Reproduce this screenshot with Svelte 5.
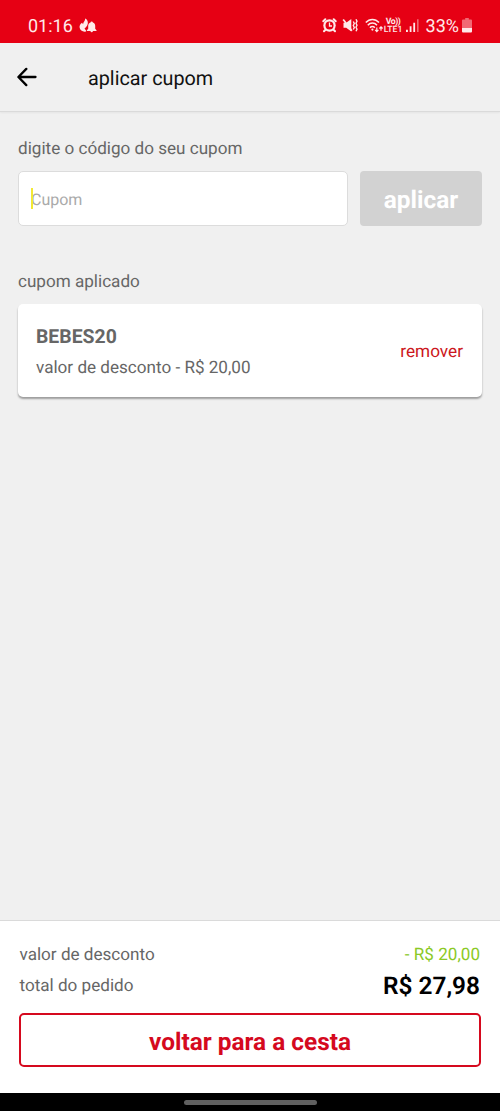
<script lang="ts">
	let code = $state('');
	let focused = $state(true);

	const coupon = { code: 'BEBES20', discount: 'R$ 20,00' };
	const total = 'R$ 27,98';
</script>

<div class="screen">
	<div class="status">
		<div class="status-left">
			<span class="clock">01:16</span>
			<svg class="notif" width="18" height="16" viewBox="0 0 18 16" fill="currentColor">
				<path d="M6.200.5C6.500 2.800 4 4 4.100 6.300L3 4.800C1.200 6.200.3 7.800.6 9.600 1 12.400 3.500 14 6.300 13.700L7.400 13 5.500 10.500C7.500 9 9.300 7 8.800 4 8.500 2.200 7.500 1.200 6.200.5Z" />
				<path d="M12.700 3.400a1.200 1.200 0 0 1 1.200 1c1.500.5 2.300 1.700 2.300 3.300v3.100l1.300 1.500v.7h-3.600a1.200 1.200 0 0 1-2.400 0H7.900v-.7l1.300-1.500V7.700c0-1.600.8-2.800 2.300-3.300a1.200 1.200 0 0 1 1.200-1Z" stroke="#e60014" stroke-width=".5" paint-order="stroke" />
			</svg>
		</div>
		<div class="status-right">
			<svg class="alarm" width="15" height="15" viewBox="0 0 15 15">
				<circle cx="7.500" cy="7.500" r="6.200" fill="currentColor" />
				<path d="M1.300 3.300 3.300 1.300M13.700 3.300 11.700 1.300M3.200 12 2 13.300M11.800 12l1.200 1.300" fill="none" stroke="currentColor" stroke-width="2" stroke-linecap="round" />
				<circle cx="7.500" cy="7.500" r="4" fill="#e60014" />
				<path d="M7.500 4.500v3.500h2.500" fill="none" stroke="currentColor" stroke-width="1.300" />
			</svg>
			<svg class="mute" width="16" height="15" viewBox="0 0 16 15">
				<path d="M1.500 4.800h2.700L9.300 1v12.500L4.200 9.800H1.500Z" fill="currentColor" />
				<path d="M1.200 1.500l8.700 11.300" stroke="currentColor" stroke-width="1.700" />
				<path d="M11.300 3.500l1 2-1 2 1 2-1 2M14 1.300l1 2-1 2 1 2-1 2 1 2-1 2" fill="none" stroke="currentColor" stroke-width="1.400" />
			</svg>
			<svg class="wifi" width="19" height="15" viewBox="0 0 19 15" fill="none" stroke="currentColor" stroke-width="1.500">
				<path d="M.8 4.600C4.500.4 10.300.4 14 4.600M2.800 7.200c2.500-2.900 6.700-2.900 9.200 0M5 9.800c1.300-1.600 3.500-1.600 4.800 0" />
				<circle cx="7.400" cy="11.600" r="1.100" fill="currentColor" stroke="none" />
				<path d="M11.800 9.500v4M10.200 11.900l1.600 1.700 1.600-1.700M16 12.800V8.800M14.400 10.500 16 8.800l1.600 1.700" stroke-width="1.200" />
			</svg>
			<span class="volte"><span class="vo">Vo))</span><span>LTE1</span></span>
			<svg class="signal" width="13" height="15" viewBox="0 0 13 15" fill="currentColor">
				<path d="M0 11.800h1.900v2.200H0zM3.700 8.300h1.800V14H3.700zM7.300 4.800h1.800V14H7.300z" />
				<path d="M11 1.200h1.600V14H11z" opacity=".45" />
			</svg>
			<span class="percent">33%</span>
			<svg class="battery" width="10" height="15" viewBox="0 0 10 15" fill="currentColor">
				<path d="M3.200 0h3.600v1.500h2.200a1 1 0 0 1 1 1V10H0V2.500a1 1 0 0 1 1-1h2.200Z" opacity=".45" />
				<path d="M0 10h10v3.400a1 1 0 0 1-1 1H1a1 1 0 0 1-1-1Z" />
			</svg>
		</div>
	</div>

	<header class="topbar">
		<button type="button" class="back" aria-label="voltar">
			<svg width="20" height="20" viewBox="0 0 20 20" fill="none" stroke="currentColor" stroke-width="2.300" stroke-linecap="round" stroke-linejoin="round">
				<path d="M18.500 10H1.600M9.300 1.900 1.400 10l7.900 8.100" />
			</svg>
		</button>
		<h1>aplicar cupom</h1>
	</header>

	<main>
		<label class="label" for="coupon">digite o código do seu cupom</label>
		<div class="form">
			<div class="field">
				<input
					id="coupon"
					placeholder="Cupom"
					bind:value={code}
					onfocus={() => (focused = true)}
					onblur={() => (focused = false)}
				/>
				{#if focused && !code}<span class="caret"></span>{/if}
			</div>
			<button type="button" class="apply" disabled={!code}>aplicar</button>
		</div>

		<p class="label applied">cupom aplicado</p>
		<div class="card">
			<div>
				<p class="code">{coupon.code}</p>
				<p class="discount">valor de desconto - {coupon.discount}</p>
			</div>
			<button type="button" class="remove">remover</button>
		</div>
	</main>

	<footer>
		<div class="row">
			<span>valor de desconto</span>
			<span class="green">- {coupon.discount}</span>
		</div>
		<div class="row">
			<span>total do pedido</span>
			<span class="total">{total}</span>
		</div>
		<button type="button" class="basket">voltar para a cesta</button>
	</footer>

	<div class="navbar"><span class="handle"></span></div>
</div>

<style>
	:global(body) {
		background: #f0f0f0;
	}
	.screen {
		height: 1111px;
		display: flex;
		flex-direction: column;
		background: #f0f0f0;
		font-family: Roboto, 'Liberation Sans', sans-serif;
		text-rendering: geometricPrecision;
		color: #666;
	}
	p,
	h1 {
		margin: 0;
	}
	button {
		font-family: inherit;
		text-rendering: inherit;
		padding: 0;
		border: 0;
		background: none;
		cursor: pointer;
	}
	.status {
		height: 43px;
		box-sizing: border-box;
		padding: 8px 28px 0 28px;
		display: flex;
		justify-content: space-between;
		align-items: center;
		background: #e60014;
		color: #ffe9e9;
		font-size: 18px;
		line-height: 22px;
	}
	.status-left,
	.status-right {
		display: flex;
		align-items: center;
	}
	.clock,
	.percent {
		padding-top: 2px;
	}
	.notif {
		margin-left: 6px;
	}
	.mute {
		margin-left: 5px;
	}
	.wifi {
		margin-left: 7px;
	}
	.volte {
		width: 19px;
		display: flex;
		flex-direction: column;
		align-items: center;
		font-size: 8.7px;
		line-height: 8px;
		font-weight: 500;
	}
	.vo {
		font-weight: 700;
		letter-spacing: -0.5px;
	}
	.signal {
		margin-left: 3px;
	}
	.percent {
		margin-left: 7px;
	}
	.battery {
		margin-left: 3px;
	}
	.topbar {
		height: 68px;
		display: flex;
		align-items: center;
		padding-left: 17px;
		border-bottom: 1px solid #dadada;
		box-shadow: 0 1px 2px rgba(0, 0, 0, 0.05);
		color: #111;
	}
	.back {
		display: flex;
		color: #000;
	}
	h1 {
		margin: 3px 0 0 51px;
		font-size: 19.8px;
		font-weight: 400;
		line-height: 24px;
	}
	main {
		flex: 1;
		padding: 26px 18px 0;
	}
	.label {
		display: block;
		font-size: 17.1px;
		line-height: 22px;
	}
	.form {
		display: flex;
		gap: 12px;
		margin-top: 11px;
	}
	.field {
		position: relative;
		flex: 1;
	}
	input {
		width: 100%;
		height: 55px;
		box-sizing: border-box;
		padding: 2px 12px 0;
		border: 1px solid #dcdcdc;
		border-radius: 5px;
		background: #fff;
		font: 400 16px/20px Roboto, 'Liberation Sans', sans-serif;
		text-rendering: inherit;
		color: #666;
		caret-color: #f0e62c;
		outline: none;
	}
	input::placeholder {
		color: #aaa;
	}
	.caret {
		position: absolute;
		left: 13px;
		top: 17px;
		width: 2px;
		height: 21px;
		background: #f2e935;
	}
	.apply {
		width: 122px;
		height: 55px;
		padding-top: 2px;
		border-radius: 4px;
		background: #d2d2d2;
		color: #fff;
		font-size: 24.4px;
		font-weight: 700;
	}
	.applied {
		margin-top: 45px;
	}
	.card {
		height: 93px;
		box-sizing: border-box;
		margin-top: 11px;
		padding: 3px 19px 0 18px;
		display: flex;
		justify-content: space-between;
		align-items: center;
		border-radius: 5px;
		background: #fff;
		box-shadow: 0 2px 2px rgba(0, 0, 0, 0.35);
	}
	.code {
		font-size: 19.4px;
		font-weight: 700;
		line-height: 24px;
	}
	.discount {
		margin-top: 8px;
		font-size: 17.1px;
		line-height: 22px;
	}
	.remove {
		color: #cc1720;
		font-size: 17.2px;
	}
	footer {
		height: 173px;
		box-sizing: border-box;
		padding: 18px 19px 0;
		border-top: 1px solid #dadada;
		background: #fff;
	}
	.row {
		height: 31px;
		padding: 0 1px 0 0.5px;
		display: flex;
		justify-content: space-between;
		align-items: center;
		font-size: 17.1px;
	}
	.green {
		color: #8bc926;
	}
	.total {
		color: #000;
		font-size: 24.4px;
		font-weight: 600;
	}
	.basket {
		width: 100%;
		height: 54px;
		margin-top: 12px;
		padding-top: 2px;
		border: 2px solid #d5091e;
		border-radius: 5px;
		color: #d5091e;
		font-size: 24.4px;
		font-weight: 700;
	}
	.navbar {
		height: 18px;
		display: flex;
		align-items: center;
		justify-content: center;
		background: #000;
	}
	.handle {
		width: 133px;
		height: 5px;
		border-radius: 3px;
		background: #606060;
	}
</style>
